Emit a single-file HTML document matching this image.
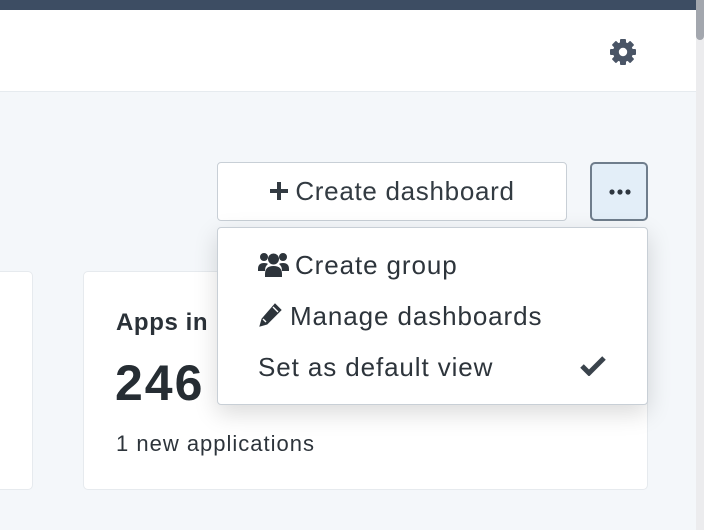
<!DOCTYPE html>
<html><head><style>
*{box-sizing:border-box;margin:0;padding:0}
body{width:704px;height:530px;overflow:hidden;background:#f4f7fa;font-family:"Liberation Sans",Arial,sans-serif;color:#2d343b;position:relative}
.top{position:absolute;left:0;top:0;width:696px;height:10px;background:#3d4d63}
.hdr{position:absolute;left:0;top:10px;width:696px;height:82px;background:#fff;border-bottom:1px solid #e6ebef}
.sb{position:absolute;left:696px;top:0;width:8px;height:530px;background:#ececee}
.thumb{position:absolute;left:696px;top:0;width:8px;height:40px;background:#a3a7ae;border-radius:0 0 4px 4px}
.card{position:absolute;top:271px;height:219px;background:#fff;border:1px solid #e6eaee;border-radius:5px}
.btn{position:absolute;left:217px;top:162px;width:350px;height:59px;background:#fff;border:1px solid #c8cfd6;border-radius:4px;font-size:26px;color:#333b42;text-align:center;line-height:57px;letter-spacing:0.7px}
.more{position:absolute;left:590px;top:162px;width:58px;height:59px;background:#e3eef8;border:2px solid #6f7d8c;border-radius:5px}
.menu{position:absolute;left:217px;top:227px;width:431px;height:178px;background:#fff;border:1px solid #c8cfd6;border-radius:4px;box-shadow:0 8px 24px rgba(0,0,0,.15);font-size:26px;color:#2d343b;letter-spacing:0.9px}
.item{position:absolute;left:40px;white-space:nowrap}
</style></head><body>
<div class="top"></div>
<div class="hdr">
<svg style="position:absolute;left:609px;top:28px" width="28" height="28" viewBox="0 0 28 28"><g fill="#4a5566"><circle cx="14" cy="14" r="10"/><g><rect x="11" y="1" width="6" height="26" rx="1"/><rect x="11" y="1" width="6" height="26" rx="1" transform="rotate(45 14 14)"/><rect x="11" y="1" width="6" height="26" rx="1" transform="rotate(90 14 14)"/><rect x="11" y="1" width="6" height="26" rx="1" transform="rotate(135 14 14)"/></g></g><circle cx="14" cy="14" r="4.2" fill="#fff"/></svg>
</div>
<div class="sb"></div><div class="thumb"></div>
<div class="card" style="left:-10px;width:43px"></div>
<div class="card" style="left:83px;width:565px">
<div style="position:absolute;left:32px;top:37px;font-size:24px;font-weight:bold;color:#2a3138;letter-spacing:0.6px">Apps in</div>
<div style="position:absolute;left:31px;top:82px;font-size:50px;font-weight:bold;color:#262d33;letter-spacing:2px">246</div>
<div style="position:absolute;left:32px;top:159px;font-size:22px;color:#2d343b;letter-spacing:1px">1 new applications</div>
</div>
<div class="btn"><svg width="20" height="20" viewBox="0 0 20 20" style="vertical-align:-1px;margin-right:6px"><path d="M8 1h4v7h7v4h-7v7h-4v-7h-7v-4h7z" fill="#333b42"/></svg>Create dashboard</div>
<div class="more"><svg style="position:absolute;left:17px;top:25px" width="22" height="6"><circle cx="3" cy="3" r="2.6" fill="#2f3740"/><circle cx="11" cy="3" r="2.6" fill="#2f3740"/><circle cx="19" cy="3" r="2.6" fill="#2f3740"/></svg></div>
<div class="menu">
<div class="item" style="top:22px"><svg width="31" height="26" viewBox="0 0 31 26" style="vertical-align:-3px;margin-right:6px"><g fill="#2d343b"><circle cx="6" cy="6" r="4"/><circle cx="25" cy="6" r="4"/><circle cx="15.5" cy="8" r="5.5"/><path d="M0 18q0-6 6-6q3 0 4 1q-3 2-3 7H0z"/><path d="M31 18q0-6-6-6q-3 0-4 1q3 2 3 7h7z"/><path d="M7 26v-3q0-8 8.5-8t8.5 8v3z"/></g></svg>Create group</div>
<div class="item" style="top:73px"><svg width="24" height="24" viewBox="0 0 24 24" style="vertical-align:-2px;margin-right:8px"><path d="M17 1l6 6L9 21l-7 2 2-7z M4.5 16.5l3 3" fill="#2d343b" stroke="#2d343b" stroke-width="1"/><path d="M15 4l5 5M5 16l3 3" stroke="#fff" stroke-width="1.4" fill="none"/></svg>Manage dashboards</div>
<div class="item" style="top:124px">Set as default view</div>
<svg style="position:absolute;left:362px;top:128px" width="26" height="20" viewBox="0 0 26 20"><path d="M2 10l7 7L24 2" stroke="#3a434c" stroke-width="5" fill="none"/></svg>
</div>
</body></html>
